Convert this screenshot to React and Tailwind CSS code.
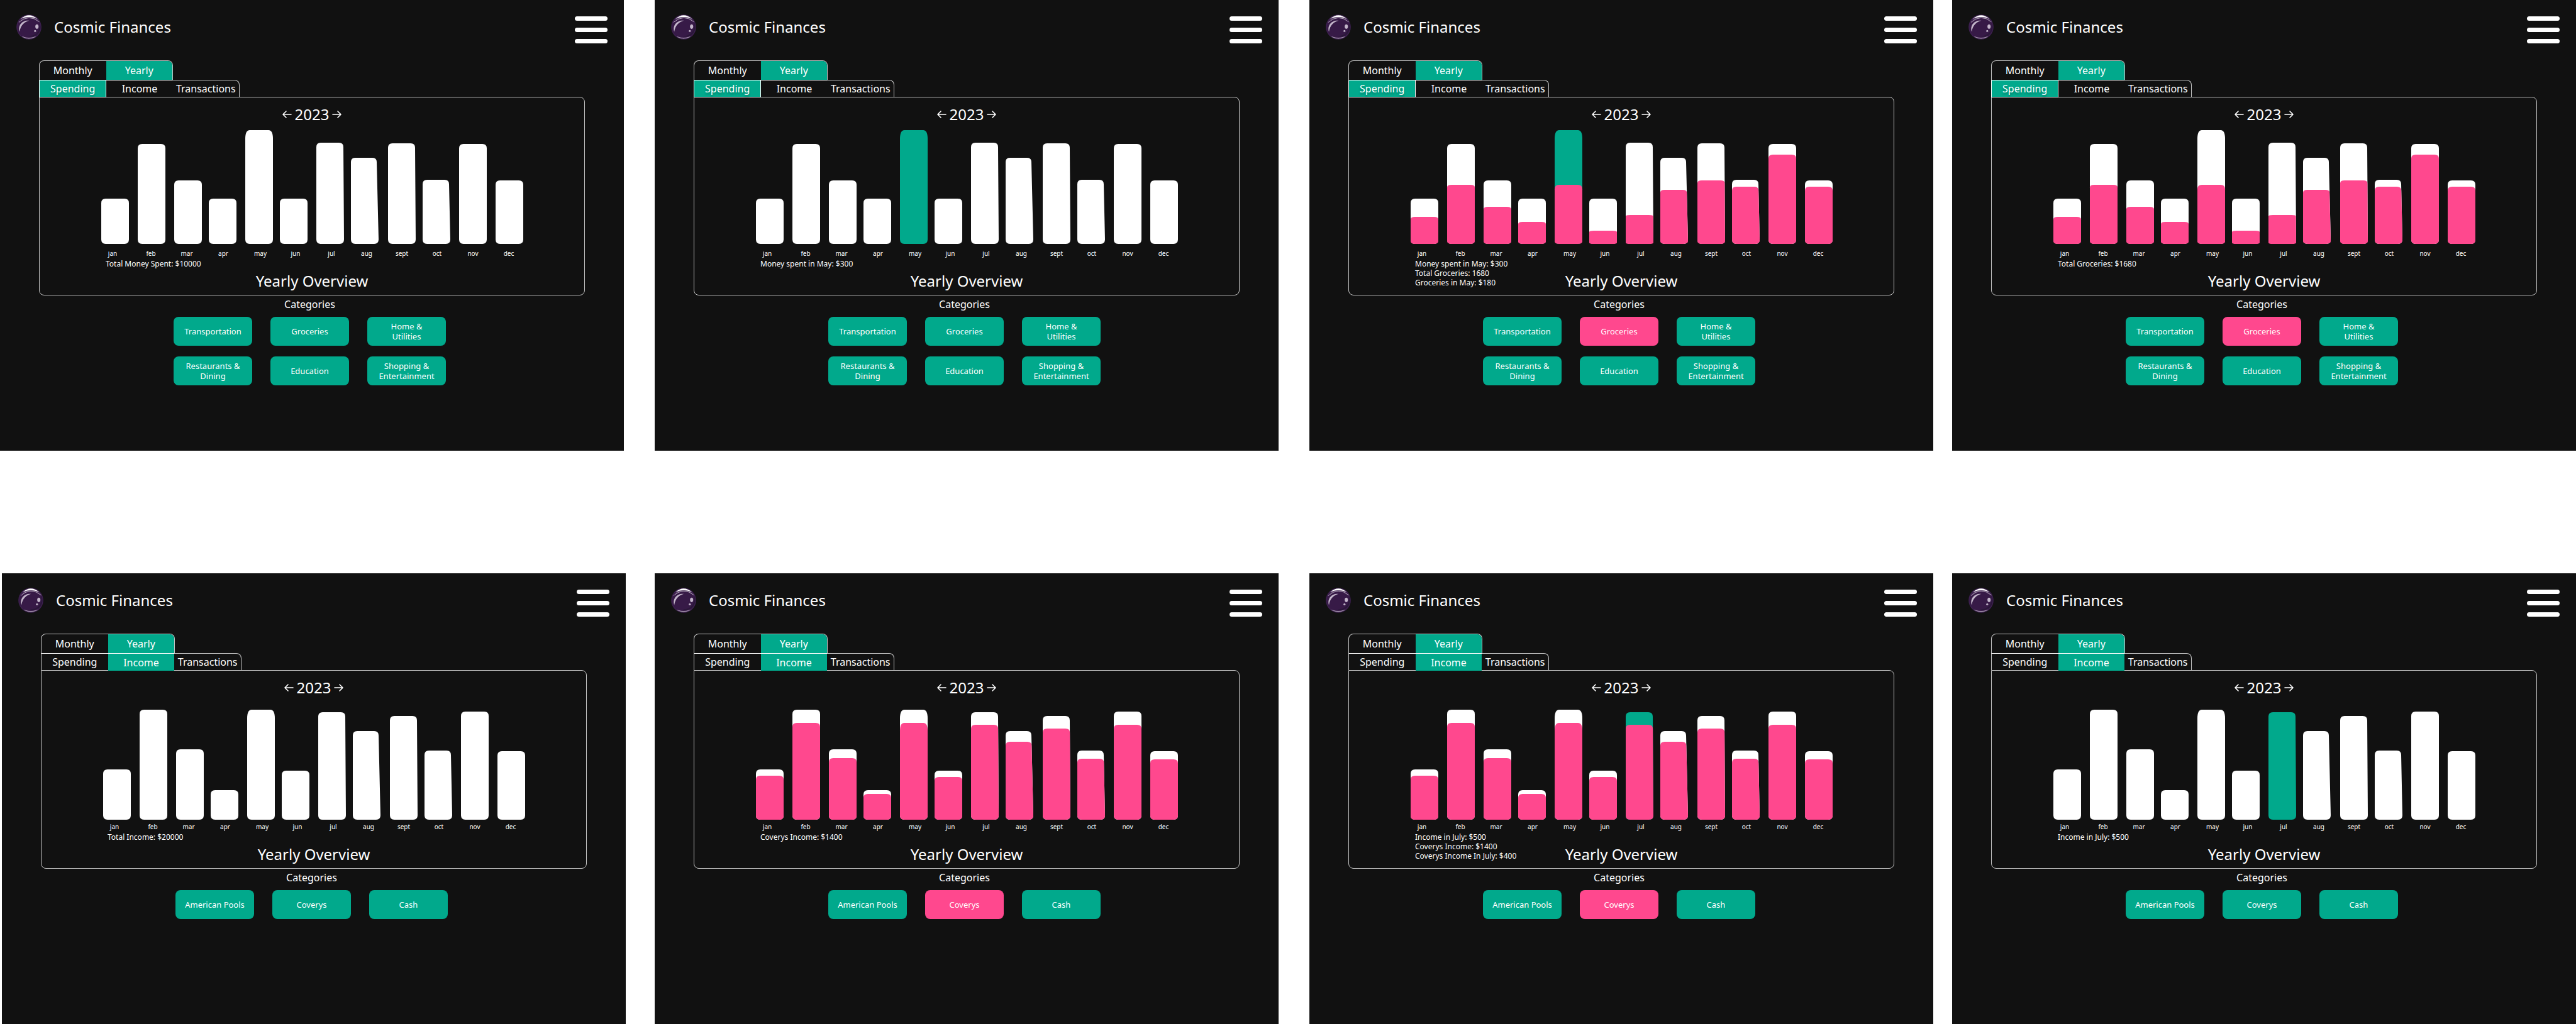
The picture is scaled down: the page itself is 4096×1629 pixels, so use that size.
const MONTHS = [
  // x and skew describe each column, label is the centre of its caption
  { name: "jan", x: 161, skew: 0, label: 179 },
  { name: "feb", x: 219, skew: 0, label: 240 },
  { name: "mar", x: 277, skew: 0, label: 297 },
  { name: "apr", x: 332, skew: 0, label: 355 },
  { name: "may", x: 390, skew: 0, label: 414 },
  { name: "jun", x: 445, skew: 0, label: 470 },
  { name: "jul", x: 503, skew: 1, label: 527 },
  { name: "aug", x: 558, skew: 3, label: 583 },
  { name: "sept", x: 617, skew: 1, label: 639 },
  { name: "oct", x: 672, skew: 2, label: 695 },
  { name: "nov", x: 730, skew: 0, label: 752 },
  { name: "dec", x: 788, skew: 0, label: 809 },
];

const SPENDING = {
  base: 387,
  totals: [72, 159, 101, 72, 181, 72, 161, 137, 160, 102, 159, 101],
  parts: [43, 94, 59, 35, 94, 21, 46, 86, 101, 91, 142, 91],
};

const INCOME = {
  base: 391,
  totals: [80, 175, 112, 47, 175, 78, 171, 141, 165, 110, 172, 109],
  parts: [70, 154, 98, 41, 154, 68, 151, 124, 145, 97, 151, 96],
};

const SPENDING_CATEGORIES = [
  "Transportation",
  "Groceries",
  "Home & Utilities",
  "Restaurants & Dining",
  "Education",
  "Shopping & Entertainment",
];

const INCOME_CATEGORIES = ["American Pools", "Coverys", "Cash"];

const ROWS = [
  [
    { offset: "", kind: "Spending", stats: ["Total Money Spent: $10000"] },
    { offset: "ml-[49px]", kind: "Spending", month: "may", stats: ["Money spent in May: $300"] },
    {
      offset: "ml-[49px]",
      kind: "Spending",
      month: "may",
      category: "Groceries",
      stats: ["Money spent in May: $300", "Total Groceries: 1680", "Groceries in May: $180"],
    },
    { offset: "ml-[30px]", kind: "Spending", category: "Groceries", stats: ["Total Groceries: $1680"] },
  ],
  [
    { offset: "ml-[3px]", kind: "Income", stats: ["Total Income: $20000"] },
    { offset: "ml-[46px]", kind: "Income", category: "Coverys", stats: ["Coverys Income: $1400"] },
    {
      offset: "ml-[49px]",
      kind: "Income",
      month: "jul",
      category: "Coverys",
      stats: ["Income in July: $500", "Coverys Income: $1400", "Coverys Income In July: $400"],
    },
    { offset: "ml-[30px]", kind: "Income", month: "jul", stats: ["Income in July: $500"] },
  ],
];

function barPath(x, base, height, full, skew, tall) {
  const f = height / full;
  const w = 44;
  const top = base - height;
  const rx = 7;
  const rt = (tall ? 14 : 7) * f;
  const rb = 7 * f;
  const right = x + w;
  const tr = right - skew * f;
  return [
    `M${x} ${top + rt}`,
    `Q${x} ${top} ${x + rx} ${top}`,
    `H${tr - rx}`,
    `Q${tr} ${top} ${tr} ${top + rt}`,
    `L${right} ${base - rb}`,
    `Q${right} ${base} ${right - rx} ${base}`,
    `H${x + rx}`,
    `Q${x} ${base} ${x} ${base - rb}`,
    "Z",
  ].join(" ");
}

function Chart({ data, month, split }) {
  return (
    <svg
      viewBox="161 200 671 211"
      className="mx-auto mt-1 block w-full max-w-[671px]"
      role="img"
      aria-label="Monthly totals"
    >
      {MONTHS.map((m, i) => {
        const full = data.totals[i];
        const tall = m.name === "may";
        return (
          <g key={m.name}>
            <path
              d={barPath(m.x, data.base, full, full, m.skew, tall)}
              className={m.name === month ? "fill-[#01a98c]" : "fill-white"}
            />
            {split && (
              <path
                d={barPath(m.x, data.base, data.parts[i], full, m.skew, tall)}
                className="fill-[#ff488e]"
              />
            )}
            <text x={m.label} y="406" textAnchor="middle" className="fill-white text-[10px]">
              {m.name}
            </text>
          </g>
        );
      })}
    </svg>
  );
}

function Logo() {
  return (
    <svg viewBox="0 0 51 51" className="size-10 shrink-0" aria-hidden="true">
      <circle cx="25.5" cy="25.5" r="25.3" fill="#3d2050" />
      <circle cx="25.5" cy="25.5" r="23.5" fill="#371a47" />
      <path d="M47 15C50 30 42 44 24 44C36 47 48 40 49 27C49 22 48.5 18 47 15Z" fill="#2a1839" />
      <path d="M9 9Q25.5 -5.5 42.5 9Q25.5 1.5 9 9Z" fill="#fff" />
      <path d="M5 16Q25.5 -2 46.5 15" fill="none" stroke="#e4dce8" strokeWidth="0.9" />
      <path d="M8 11.5Q25.5 0 43.5 11.5" fill="none" stroke="#8d7a99" strokeWidth="0.7" />
      <path d="M6.5 35C2.5 22 12 11 26 12.5C16 15 9 22 6.5 35Z" fill="#c3b6ca" />
      <ellipse cx="41.7" cy="24.7" rx="3.2" ry="4.5" fill="#c3b6ca" />
      <circle cx="38" cy="33.5" r="2" fill="#c3b6ca" />
      <path d="M12 45Q25.5 52.5 39 45Q25.5 50.5 12 45Z" fill="#c3b6ca" stroke="#c3b6ca" strokeWidth="0.5" />
    </svg>
  );
}

function Arrow({ label, d }) {
  return (
    <button type="button" aria-label={label} className="flex h-[30px] items-center">
      <svg
        viewBox="0 0 15 12"
        className="h-3 w-[15px]"
        fill="none"
        stroke="white"
        strokeWidth="1.6"
        strokeLinecap="round"
        strokeLinejoin="round"
      >
        <path d={d} />
      </svg>
    </button>
  );
}

function Tabs({ kind }) {
  const tabs = ["Spending", "Income", "Transactions"];
  return (
    <nav aria-label="Views" className="text-base leading-5">
      <div className="relative z-10 flex h-8 w-[213px] overflow-hidden rounded-t-lg border border-[#c4c4c4] border-b-white">
        <button type="button" className="flex-1">
          Monthly
        </button>
        <button type="button" aria-pressed="true" className="flex-1 bg-[#01a98c]">
          Yearly
        </button>
      </div>
      <div className="-mt-px flex h-[27px] w-[319px] rounded-tr-lg border-x border-t border-[#c4c4c4]">
        {tabs.map((t) => {
          let look = "flex-1 basis-0";
          if (t === kind) look = "relative z-10 -mb-px flex-1 basis-0 bg-[#01a98c]";
          if (t === kind && t === "Spending")
            look =
              "relative z-10 -mb-px -ml-px flex-1 basis-0 border border-t-0 border-white bg-[#01a98c] [text-shadow:0_3px_3px_rgba(0,0,0,0.25)]";
          return (
            <button key={t} type="button" aria-pressed={t === kind} className={look}>
              {t}
            </button>
          );
        })}
      </div>
    </nav>
  );
}

function Screen({ offset, kind, month, category, stats }) {
  const spending = kind === "Spending";
  const categories = spending ? SPENDING_CATEGORIES : INCOME_CATEGORIES;
  return (
    <section className={`min-h-[717px] min-w-0 flex-1 bg-[#111111] pt-[23px] text-white ${offset}`}>
      <header className="flex items-start justify-between px-[26px]">
        <div className="flex items-center gap-5">
          <Logo />
          <h1 className="text-[24px] leading-[30px]">Cosmic Finances</h1>
        </div>
        <button type="button" aria-label="Menu" className="mt-[3px] flex w-[52px] flex-col gap-[11px]">
          <span className="h-[7px] w-full rounded-full bg-white" />
          <span className="h-[7px] w-full rounded-full bg-white" />
          <span className="h-[7px] w-full rounded-full bg-white" />
        </button>
      </header>

      <main className="mx-[62px] mt-[27px]">
        <Tabs kind={kind} />
        <div className="rounded-b-lg rounded-tr-lg border border-[#c4c4c4] pt-3 pb-[7px]">
          <div className="flex items-center justify-center gap-[5px]">
            <Arrow label="Previous year" d="M14 6H1M6 1L1 6L6 11" />
            <span className="text-[24px] leading-[30px]">2023</span>
            <Arrow label="Next year" d="M1 6H14M9 1L14 6L9 11" />
          </div>
          <Chart data={spending ? SPENDING : INCOME} month={month} split={Boolean(category)} />
          <div className="grid grid-cols-[1fr_auto_1fr]">
            <div className="pl-[105px] text-xs leading-[15px]">
              {stats.map((s) => (
                <p key={s}>{s}</p>
              ))}
            </div>
            <h2 className="mt-5 text-[24px] leading-[30px]">Yearly Overview</h2>
          </div>
        </div>

        <div className="pr-[7px]">
          <h3 className="mt-1 text-center text-base leading-5">Categories</h3>
          <div className="mt-[10px] flex justify-center">
            <div className="grid grid-cols-3 gap-x-[29px] gap-y-[17px]">
              {categories.map((c) => (
                <button
                  key={c}
                  type="button"
                  aria-pressed={c === category}
                  className={
                    c === category
                      ? "h-[46px] w-[125px] rounded-lg bg-[#ff488e] px-2 text-[13px] leading-4"
                      : "h-[46px] w-[125px] rounded-lg bg-[#01a98c] px-2 text-[13px] leading-4"
                  }
                >
                  {c.includes("&") ? (
                    <>
                      {c.slice(0, c.indexOf("&") + 1)}
                      <br />
                      {c.slice(c.indexOf("&") + 2)}
                    </>
                  ) : (
                    c
                  )}
                </button>
              ))}
            </div>
          </div>
        </div>
      </main>
    </section>
  );
}

export default function App() {
  return (
    <div className="flex min-h-screen flex-col gap-[195px] bg-white font-['Noto_Sans',sans-serif]">
      {ROWS.map((row, r) => (
        <div key={r} className="flex">
          {row.map((s, i) => (
            <Screen key={i} {...s} />
          ))}
        </div>
      ))}
    </div>
  );
}
